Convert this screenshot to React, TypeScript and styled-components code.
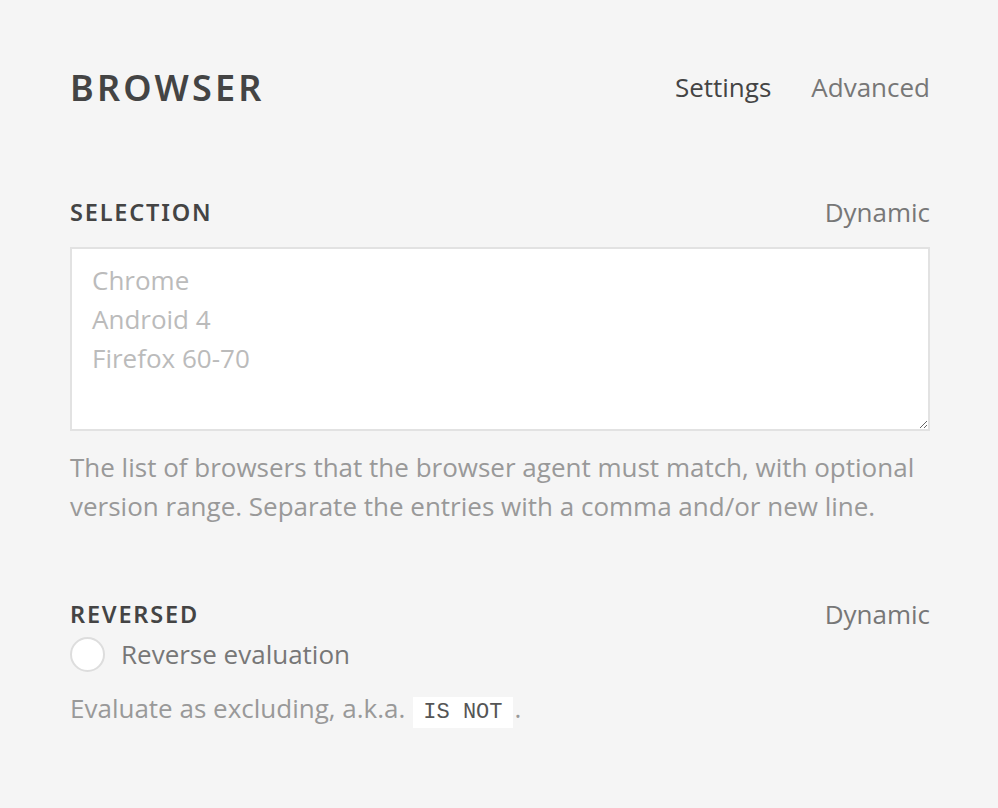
import React from "react";
import styled, { createGlobalStyle } from "styled-components";

const Global = createGlobalStyle`
  html, body { margin: 0; padding: 0; background: #f5f5f5; }
  body { font-family: "Open Sans", "Liberation Sans", sans-serif; }
`;

const Page = styled.div`
  padding: 61px 68px 40px 70px;
  display: flex;
  flex-direction: column;
`;

const Header = styled.header`
  display: flex;
  align-items: center;
  justify-content: space-between;
  height: 52px;
`;

const Title = styled.h1`
  margin: 0;
  font-family: "Noto Sans", "Open Sans", sans-serif;
  font-weight: 600;
  font-size: 36px;
  letter-spacing: 3.2px;
  color: #444;
`;

const Tabs = styled.nav`
  display: flex;
  gap: 40px;
`;

const Tab = styled.span<{ $active?: boolean }>`
  font-size: 26px;
  color: ${(p) => (p.$active ? "#444" : "#777")};
`;

const Section = styled.section<{ $top: number }>`
  margin-top: ${(p) => p.$top}px;
  display: flex;
  flex-direction: column;
`;

const LabelRow = styled.div`
  display: flex;
  justify-content: space-between;
  align-items: center;
  height: 32px;
`;

const Label = styled.h2`
  margin: 0;
  font-family: "Noto Sans", "Open Sans", sans-serif;
  font-weight: 600;
  font-size: 23.5px;
  letter-spacing: 1.8px;
  color: #444;
`;

const Dynamic = styled.span`
  font-size: 26px;
  color: #777;
`;

const TextArea = styled.textarea`
  margin-top: 19px;
  box-sizing: border-box;
  width: 100%;
  height: 184px;
  border: 2px solid #e2e2e2;
  background: #fff;
  padding: 12px 20px;
  font-family: "Open Sans", sans-serif;
  font-size: 26px;
  line-height: 39px;
  color: #444;
  resize: vertical;
  outline: none;
  &::placeholder { color: #bbb; }
`;

const Help = styled.p<{ $top: number }>`
  margin: ${(p) => p.$top}px 0 0;
  font-size: 26px;
  line-height: 39px;
  color: #999;
`;

const RadioRow = styled.label`
  display: flex;
  align-items: center;
  gap: 16px;
  height: 42px;
  margin-top: 3px;
`;

const Radio = styled.span`
  width: 31px;
  height: 31px;
  border-radius: 50%;
  border: 2px solid #ddd;
  background: #fff;
`;

const RadioText = styled.span`
  font-size: 26px;
  color: #777;
`;

const Code = styled.code`
  font-family: "Liberation Mono", "DejaVu Sans Mono", monospace;
  font-size: 22px;
  color: #555;
  background: #fff;
  padding: 3px 10px;
  margin: 0 2px 0 8px;
`;

export default function App() {
  return (
    <>
      <Global />
      <Page>
        <Header>
          <Title>BROWSER</Title>
          <Tabs>
            <Tab $active>Settings</Tab>
            <Tab>Advanced</Tab>
          </Tabs>
        </Header>
        <Section $top={83}>
          <LabelRow>
            <Label>SELECTION</Label>
            <Dynamic>Dynamic</Dynamic>
          </LabelRow>
          <TextArea placeholder={"Chrome\nAndroid 4\nFirefox 60-70"} />
          <Help $top={17}>
            The list of browsers that the browser agent must match, with optional version range.
            Separate the entries with a comma and/or new line.
          </Help>
        </Section>
        <Section $top={72}>
          <LabelRow>
            <Label>REVERSED</Label>
            <Dynamic>Dynamic</Dynamic>
          </LabelRow>
          <RadioRow>
            <Radio />
            <RadioText>Reverse evaluation</RadioText>
          </RadioRow>
          <Help $top={14}>
            Evaluate as excluding, a.k.a.<Code>IS NOT</Code>.
          </Help>
        </Section>
      </Page>
    </>
  );
}
